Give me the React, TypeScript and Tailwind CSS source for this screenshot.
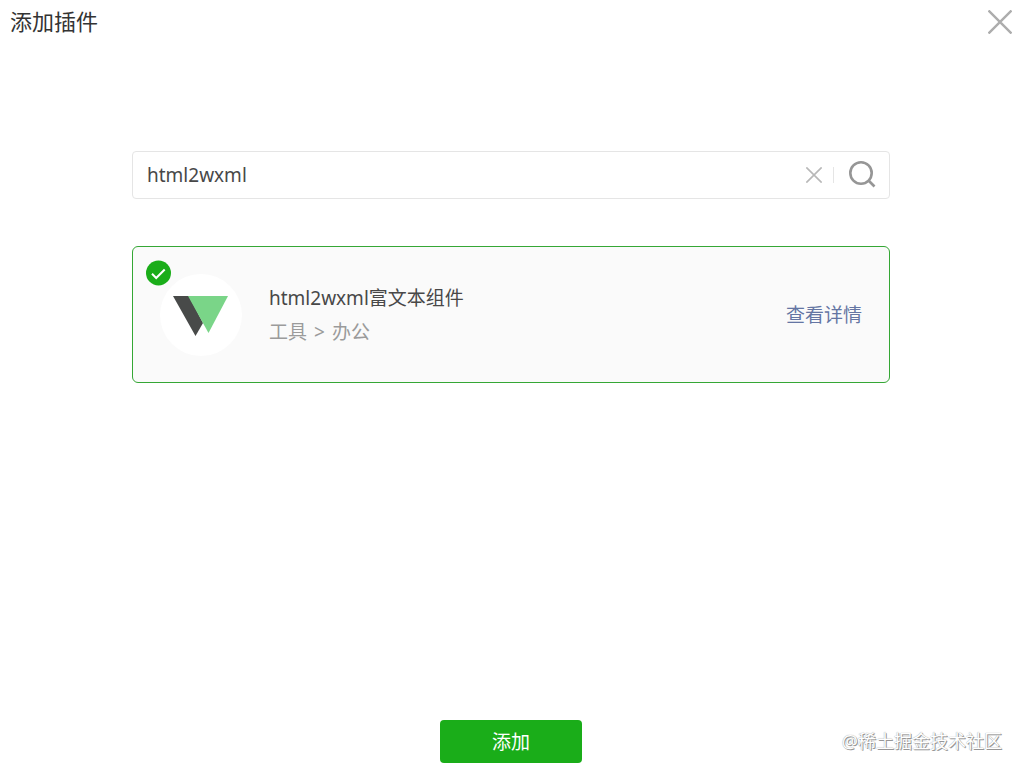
import { useState } from 'react';

function CloseIcon({ className, strokeWidth }: { className: string; strokeWidth: number }) {
  return (
    <svg viewBox="0 0 24 24" className={className} aria-hidden="true">
      <path
        d="M0.5 0.5L23.5 23.5M23.5 0.5L0.5 23.5"
        fill="none"
        stroke="currentColor"
        strokeWidth={strokeWidth}
      />
    </svg>
  );
}

function SearchIcon() {
  return (
    <svg viewBox="0 0 28 28" className="size-7" aria-hidden="true">
      <g fill="none" stroke="currentColor" strokeWidth="2.6">
        <circle cx="13" cy="12" r="10.7" />
        <path d="M20.5 19.500L26.5 25.500" />
      </g>
    </svg>
  );
}

function CheckBadge() {
  return (
    <svg viewBox="0 0 26 26" className="absolute left-3 top-[13px] size-[26px]" aria-hidden="true">
      <circle cx="13.500" cy="13" r="12.5" fill="#1aad19" />
      <path d="M7 13.8L11.2 18L19.7 9.5" fill="none" stroke="#fff" strokeWidth="2" />
    </svg>
  );
}

function PluginLogo() {
  return (
    <svg viewBox="0 0 82 82" className="size-[82px] shrink-0" aria-hidden="true">
      <circle cx="41" cy="41" r="41" fill="#fff" />
      <path d="M13 22H29L43 49L35.5 62Z" fill="#484a49" />
      <path d="M28 22H68L48.5 59Z" fill="#7ad588" />
    </svg>
  );
}

export default function App() {
  const [keyword, setKeyword] = useState('html2wxml');
  const [selected, setSelected] = useState(true);

  return (
    <div className="relative flex min-h-screen flex-col bg-white font-['Noto_Sans','Noto_Sans_CJK_SC',sans-serif] text-[19px] leading-7 text-[#484848]">
      <header className="flex h-11 items-center justify-between pl-2.5 pr-3">
        <h1 className="pb-0.5 text-[22px] text-[#333]">添加插件</h1>
        <button type="button" aria-label="关闭" className="text-[#adadad]">
          <CloseIcon className="size-6" strokeWidth={2.4} />
        </button>
      </header>

      <main className="flex-1 pl-[132px] pr-[134px] pt-[107px]">
        <form
          onSubmit={(event) => event.preventDefault()}
          className="flex h-12 items-center rounded border border-[#e5e5e5] pl-3.5 pr-[13px]"
        >
          <input
            type="text"
            aria-label="搜索插件"
            value={keyword}
            onChange={(e) => setKeyword(e.target.value)}
            className="min-w-0 flex-1 bg-transparent outline-none"
          />
          <button
            type="button"
            aria-label="清空"
            onClick={() => setKeyword('')}
            className="text-[#b8b8b8]"
          >
            <CloseIcon className="size-4" strokeWidth={2.4} />
          </button>
          <span className="ml-[11px] mr-3.5 h-4 w-px bg-[#e5e5e5]" />
          <button type="submit" aria-label="搜索" className="text-[#969696]">
            <SearchIcon />
          </button>
        </form>

        <section className="relative mt-[47px] flex h-[137px] items-center rounded-md border border-[#35a735] bg-[#fafafa] px-[27px]">
          <button
            type="button"
            aria-label="选择 html2wxml富文本组件"
            aria-pressed={selected}
            onClick={() => setSelected(!selected)}
          >
            {selected && <CheckBadge />}
            <PluginLogo />
          </button>
          <div className="ml-[27px] flex-1 space-y-1.5">
            <h2>html2wxml富文本组件</h2>
            <p className="flex gap-[7px] text-[#9b9b9b]">
              <span>工具</span>
              <span>&gt;</span>
              <span>办公</span>
            </p>
          </div>
          <a href="#detail" className="text-[#6475a3]">
            查看详情
          </a>
        </section>
      </main>

      <footer className="flex justify-center pb-2.5 pl-[132px] pr-[134px]">
        <button type="button" className="h-[43px] w-[142px] rounded bg-[#1aad19] text-white">
          添加
        </button>
      </footer>

      <p className="absolute bottom-[18px] right-[22px] text-[18px] text-white [text-shadow:0_0_1px_#888,1px_1px_0_#999]">
        @稀土掘金技术社区
      </p>
    </div>
  );
}
